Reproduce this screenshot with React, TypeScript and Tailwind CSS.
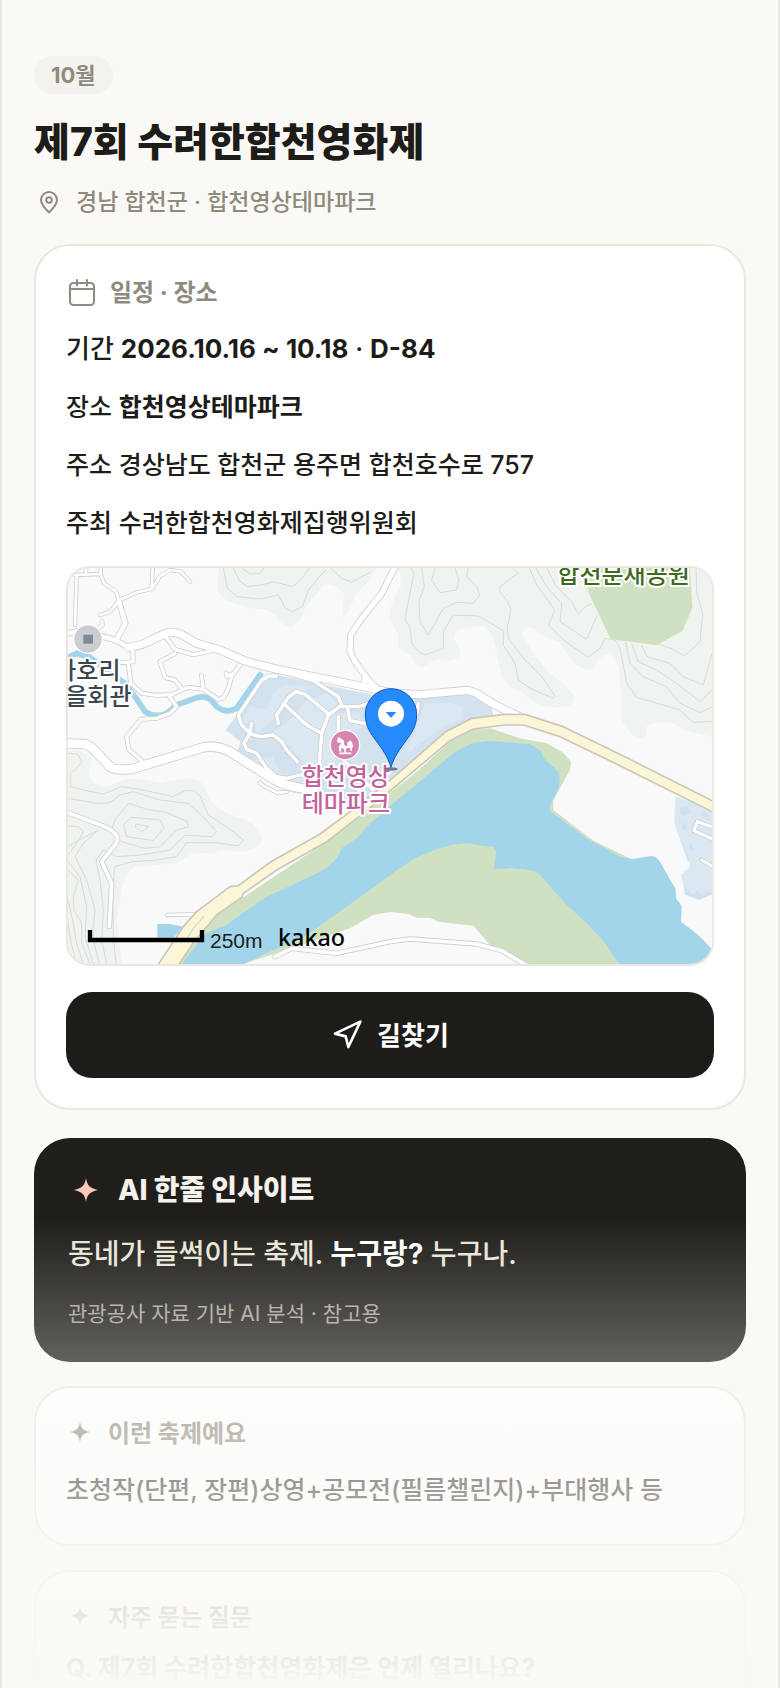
import type { ReactNode } from 'react';
import { Navigation } from 'lucide-react';

const contours = [
  'M545 24L570 42L600 40L612 24',
  'M520 24L538 62L562 80L602 75L640 66L668 72L698 80L722 60L748 24',
  'M490 24L502 85L530 110L600 117L655 105L676 145L698 155L728 138L745 90L776 52L800 28',
  'M812 24L845 55L875 66L930 38',
  'M1052 24L1062 40L1035 175L1052 210L1055 250L1075 275L1095 285L1150 265L1150 215L1180 165L1255 168L1330 212L1330 255L1365 310L1375 360L1410 385L1480 415L1485 408L1445 350L1395 300L1345 235L1342 205L1352 150L1340 120L1318 95L1320 80L1375 38L1360 24',
  'M1085 24L1093 80L1077 120L1080 185L1105 225L1150 145L1190 127L1240 130L1260 105L1250 80L1220 50L1225 24',
  'M1125 24L1115 60L1140 98L1190 90L1196 60L1185 24',
  'M1408 24L1430 75L1485 150L1465 195L1510 240L1585 292L1620 265L1635 235L1665 240L1680 265L1700 370L1730 412L1860 450L1900 487L1956 484',
  'M1427 24L1460 80L1505 130L1500 185L1580 238L1612 165',
  'M1460 24L1490 80L1535 125L1555 163L1570 145L1595 130',
  'M1697 245L1710 310L1750 350L1820 380L1860 430L1920 458L1956 440',
  'M1715 250L1735 305L1790 330L1850 370L1920 425L1956 390',
  'M1745 255L1760 290L1830 310L1870 350L1930 375L1956 280',
  'M1793 252L1840 268L1873 288L1920 245L1928 160L1910 100L1908 24',
  'M24 580L52 582L66 605L50 625L32 640L32 680L70 690L130 702L185 680L240 688L340 710L376 692L402 692L422 710L445 765L520 815L550 840L535 858L470 848L380 848L350 890L290 900L215 905L165 920L158 980L160 1130L168 1212',
  'M24 715L110 730L150 728L180 705L220 695L300 720L385 730L425 765L470 815L455 830L375 826L330 870L240 885L170 890L130 870L108 900L120 960L130 1050L125 1140L140 1212',
  'M205 730L165 780L155 808L185 845L255 865L300 860L350 810L386 800L382 785L318 757L270 750Z',
  'M215 772L190 795L200 830L280 842L312 804L300 780Z',
  'M228 792L226 802L245 815L266 800Z',
  'M24 798L55 800L70 815L45 858L24 885',
  'M24 858L115 810L70 850L45 890L80 960L105 1050L98 1130L118 1212',
  'M24 905L60 950L80 1040L75 1130L100 1212',
  'M24 930L55 960L40 1010L42 1050L65 1090L65 1150L90 1212',
  'M24 1020L40 1090L50 1150L70 1212',
  'M24 1090L34 1150L48 1205',
];

const roads = [
  { w: 8, d: 'M50 45L45 195M45 45L122 42L132 70L168 95L180 130M78 42V24M122 42V24' },
  { w: 8, d: 'M120 165L150 155L180 120L230 97L275 87L300 48L330 30L362 34L390 65M278 24L275 85' },
  { w: 14, d: 'M176 122L196 190L170 238M24 220L60 212L130 230L165 240L212 264' },
  { w: 9, d: 'M118 202L127 195L126 184' },
  { w: 10, d: 'M218 270L220 305L185 308M205 310L212 368L245 400L290 406L335 404L385 382L430 388L475 418L492 412L505 385L515 348L540 315' },
  { w: 10, d: 'M318 232L345 268L400 284L450 274M345 280L300 305L315 352L345 360L364 385' },
  { w: 9, d: 'M424 345L430 385M512 342L502 350L498 338' },
  { w: 10, d: 'M328 408L350 440L330 460L290 475L243 478L200 530L206 568L245 602' },
  { w: 22, d: 'M205 262Q240 258 260 247L310 223Q340 210 365 224L410 250L480 270L560 305L640 325L760 350L910 380L1000 400L1080 404L1222 391L1250 400L1296 430L1340 452L1400 480' },
  { w: 16, d: 'M1003 24L965 100L905 175L872 225L870 275L885 305L925 360L955 390M912 375L915 350' },
  { w: 26, d: 'M24 550L75 552L95 562L150 620Q165 632 215 627L430 562Q470 555 510 575L640 657Q670 678 760 690' },
  { w: 11, d: 'M24 758L130 798Q190 825 165 855L125 905L155 970L148 1100' },
  { w: 8, d: 'M322 1065L400 1063M600 668L612 678L650 698L680 696' },
  { w: 11, d: 'M645 1190L695 1165L830 1180L990 1145L1050 1137L1250 1152L1325 1172L1400 1216' },
  { w: 10, d: 'M650 348H625L604 362L535 465L545 495L570 520L552 550L560 568L590 580L620 625L650 650' },
  { w: 10, d: 'M575 490L568 520L600 530L640 525L665 545L680 570L712 605' },
  { w: 10, d: 'M655 490L650 465L685 412L708 395L735 403L810 465M670 430L740 495L785 520' },
  { w: 10, d: 'M690 342L760 362L835 410L845 435L805 465L785 520L776 640M845 440H895L960 420M863 445L870 482L940 495M835 470V545' },
  { w: 10, d: 'M850 600L940 690M780 640L720 645L680 655L640 648M880 665L920 730M1075 430L1070 462' },
  { w: 9, d: 'M1960 838L1902 812L1912 785L1960 802M1925 900L1960 920' },
];

const roadPath =
  'M293 1216L370 1100L410 1055L510 980L535 977L630 907L780 822L920 718L1020 635L1155 517L1235 475L1335 463H1395L1510 500L1710 598L1960 724V757L1645 600L1500 530L1390 495H1335L1240 507L1170 542L1065 630L920 752L800 845L650 930L550 1000L545 1012L470 1065L400 1148L355 1216Z';

function MapLabel({ x, y, fill, anchor, children }: { x: number; y: number; fill: string; anchor?: 'middle' | 'start'; children: ReactNode }) {
  return (
    <text
      x={x}
      y={y}
      fill={fill}
      textAnchor={anchor ?? 'start'}
      stroke="#fff"
      strokeWidth="12"
      strokeLinejoin="round"
      paintOrder="stroke"
      fontSize="72"
      fontWeight="500"
    >
      {children}
    </text>
  );
}

function VenueMap() {
  return (
    <svg
      viewBox="24 24 1932 1188"
      preserveAspectRatio="xMidYMid slice"
      className="block h-[396px] w-full"
      role="img"
      aria-label="합천영상테마파크 지도"
    >
      <rect x="-400" y="-400" width="3000" height="2200" fill="#f9f9f9" />

      {/* Hills */}
      <g fill="#eff4f1">
        <path d="M474 24V95L495 120L560 142L620 150L645 165Q665 200 695 201Q722 190 735 145L790 75Q815 65 852 98L848 174L865 155L890 100L925 65L950 24Z" />
        <path d="M1022 80Q985 140 988 175L1015 225V262L1050 285Q1070 325 1090 322L1130 298Q1190 310 1202 280Q1195 250 1180 235Q1185 210 1205 208L1270 198Q1300 220 1305 260L1325 350Q1350 390 1385 395L1420 425Q1470 450 1525 438Q1550 425 1540 405L1515 375L1460 330L1420 280L1385 222Q1395 195 1420 205L1450 228L1500 248L1535 300Q1570 340 1600 325Q1620 280 1650 285Q1680 300 1680 370L1685 480Q1715 535 1745 538Q1760 530 1760 500Q1780 480 1840 490L1870 510L1956 530V24H1010L1024 50Z" />
        <path d="M24 570H60L95 595L85 650Q110 685 145 678L190 660Q220 650 300 668L375 655Q430 655 440 695Q450 750 560 780Q610 810 605 845Q580 875 540 875L490 870L455 880H400L350 910L230 920Q195 930 185 990L170 1080L185 1212H24Z" />
      </g>
      <g fill="none" stroke="#d5dbd7" strokeWidth="3" strokeLinejoin="round">
        {contours.map((d) => (
          <path key={d} d={d} />
        ))}
      </g>
      <path d="M1585 24V97L1620 170L1652 237L1790 256L1868 212L1897 143L1890 24Z" fill="#cfe1c1" />

      {/* Theme park grounds */}
      <path d="M620 345L497 510L542 545L527 590L600 640L690 695L900 740L1020 640L1155 517L1235 475L1300 465L1295 440L1225 402L990 415L780 372L650 345Z" fill="#d2e3ef" />
      <g fill="#dbe8f1">
        <path d="M670 375L760 380L720 400L680 420L640 480L590 520L580 480L540 500L570 440L620 450L640 400Z" />
        <path d="M740 420L800 400L830 430L800 460L900 460L910 500L860 520L820 610L740 620L690 560L640 520L690 480Z" />
        <path d="M1095 432L1180 428L1210 445L1205 478L1150 500L1040 580L1070 500Z" />
        <path d="M560 600L640 590L660 640L760 650L700 690Z" />
      </g>
      <path d="M1846 708L1843 790L1890 900L1888 922L1863 945L1875 1003L1918 1018L1960 1003V752Z" fill="#dbe8f1" />
      <g fill="#cfe1ee">
        <path d="M1860 745L1880 740L1892 755L1870 767L1860 760Z" />
        <path d="M1925 755L1948 765L1940 775L1924 768Z" />
        <path d="M1865 785L1880 795L1878 816L1866 808Z" />
        <path d="M1893 850L1902 868L1895 875L1887 862Z" />
        <path d="M1843 790L1890 900L1884 905Z" />
        <path d="M1873 984L1900 1003L1910 992L1930 1008L1945 990L1960 1000L1918 1020L1875 1004Z" />
      </g>

      {/* River and banks */}
      <path d="M355 1212L470 1065L800 845L1065 640L1170 545L1240 508L1290 505L1380 535L1460 550L1510 578L1533 605L1530 630L1480 720V750L1600 842L1720 900L1700 1212H1405L1325 1172L1287 1152L1240 1097L1135 1085L1110 1073H1070L1045 1062L990 1056L940 1065L870 1105L740 1150L550 1212Z" fill="#cfe1c1" />
      <path
        d="M365 1212L440 1118L500 1095L540 1065L620 1010L750 950L800 925L830 895L845 865L890 835L920 800L990 738L1120 630L1180 580L1235 550L1290 542L1410 553L1440 570L1452 595L1485 625L1498 640V680L1468 742L1472 755L1580 835L1680 890L1715 897L1775 888Q1790 890 1800 905L1847 988L1848 1015L1865 1038L1863 1085L1915 1125L1956 1168V1212H1678L1630 1143L1580 1090L1515 1030L1440 945Q1430 934 1410 930L1355 924L1302 928L1308 875L1302 860L1270 858L1225 850L1185 853L1130 867L1060 898L1000 938L860 1040L740 1125L550 1212Z"
        fill="#a3d5ea"
      />
      <path d="M292 1092H330L372 1100L340 1133H292Z" fill="#a3d5ea" />
      <path d="M24 292L50 280L90 292L150 340L195 370L225 410L255 455Q285 475 320 460L350 435L410 413Q440 405 455 422L470 440Q500 462 530 445Q560 400 605 338" fill="none" stroke="#a3d5ea" strokeWidth="17" />

      {/* Roads */}
      <g fill="none" strokeLinecap="round" strokeLinejoin="round">
        {roads.map((r) => (
          <path key={r.d} d={r.d} stroke="#cfcfcf" strokeWidth={r.w + 5} />
        ))}
        {roads.map((r) => (
          <path key={r.d} d={r.d} stroke="#fff" strokeWidth={r.w} />
        ))}
      </g>
      <path d={roadPath} fill="#fbf6d8" stroke="#cdc7b7" strokeWidth="5" strokeLinejoin="round" />
      <path d="M382 1135L400 1105L432 1068" fill="none" stroke="#cdc7b7" strokeWidth="3" />

      {/* Places */}
      <circle cx="84" cy="237" r="43" fill="#cacdd3" stroke="#fff" strokeWidth="4" />
      <rect x="70" y="224" width="29" height="27" fill="#7f8b91" />
      <circle cx="855" cy="555" r="44" fill="#d685ae" stroke="#fff" strokeWidth="4" />
      <path d="M834 530L839 533L850 540L853 546L851 552L857 558H862V546H866L870 541L876 547L880 560L876 563V572L871 572L870 564L862 564L858 569H853L846 563L842 569L846 574L838 575L836 560L842 552L841 547L834 549L831 544Z" fill="#fff" />
      <path d="M838 580H874M855 566V578" stroke="#fff" strokeWidth="5" />
      <g fontFamily='"Noto Sans CJK KR", sans-serif'>
        <MapLabel x={82} y={357} fill="#3a464d" anchor="middle">가호리</MapLabel>
        <MapLabel x={82} y={435} fill="#3a464d" anchor="middle">마을회관</MapLabel>
        <MapLabel x={725} y={676} fill="#c4629a">합천영상</MapLabel>
        <MapLabel x={725} y={755} fill="#c4629a">테마파크</MapLabel>
        <MapLabel x={1492} y={69} fill="#3f6a1e">합천분재공원</MapLabel>
      </g>

      {/* Marker */}
      <ellipse cx="993" cy="627" rx="20" ry="5" fill="#6b7c89" />
      <path
        d="M993 622C984 590 966 566 948 542C932 520 916 500 916 463A77 77 0 0 1 1070 463C1070 500 1054 520 1038 542C1020 566 1002 590 993 622Z"
        fill="#258bfc"
        stroke="#1458b8"
        strokeWidth="3"
      />
      <circle cx="993" cy="461" r="39" fill="#fff" />
      <path d="M977 456H1009L993 474Z" fill="#258bfc" />

      {/* Scale */}
      <path d="M90 1110V1140H426V1110" fill="none" stroke="#000" strokeWidth="13" />
      <text x="450" y="1163" fontSize="63" fill="#1c1c1c" fontFamily='"Liberation Sans", sans-serif'>
        250m
      </text>
      <text x="654" y="1157" fontSize="70" fontWeight="500" fill="#000" fontFamily='"Noto Sans", sans-serif'>
        kakao
      </text>
    </svg>
  );
}

function PinIcon() {
  return (
    <svg viewBox="0 0 30 30" className="size-[30px] shrink-0" fill="none" stroke="currentColor" strokeWidth="2" strokeLinejoin="round" aria-hidden="true">
      <path d="M15 25.500C11 21.500 7 17.500 7 13a8 8 0 0 1 16 0C23 17.500 19 21.500 15 25.500Z" />
      <circle cx="15" cy="13" r="2.800" />
    </svg>
  );
}

function CalendarIcon() {
  return (
    <svg viewBox="0 0 32 32" className="size-8 shrink-0" fill="none" stroke="currentColor" strokeWidth="2" strokeLinecap="round" aria-hidden="true">
      <rect x="4" y="6" width="24" height="22" rx="3.500" />
      <path d="M4 12H28M11 3V8.500M21 3V8.500" />
    </svg>
  );
}

function Sparkle({ className }: { className: string }) {
  return (
    <svg viewBox="0 0 24 24" className={className} fill="currentColor" aria-hidden="true">
      <path d="M12 0C13 7 15.500 10.200 24 12C15.500 13.800 13 17 12 24C11 17 8.500 13.800 0 12C8.500 10.200 11 7 12 0Z" />
    </svg>
  );
}

function Card({ children }: { children: ReactNode }) {
  return <section className="rounded-[36px] border-2 border-[#e9e7e0] bg-white p-[30px]">{children}</section>;
}

function SectionTitle({ children }: { children: ReactNode }) {
  return (
    <h2 className="flex items-center gap-[14px] text-2xl leading-8 font-bold text-[#8f8a7e]">
      <Sparkle className="mx-1 mb-1 size-5 shrink-0" />
      {children}
    </h2>
  );
}

export default function App() {
  return (
    <main className="relative h-screen overflow-hidden border-x-2 border-[#e9e7e0] bg-[#faf9f5] px-8 pt-14 font-[Inter,'Noto_Sans_CJK_KR',sans-serif] font-medium text-[#1d1c18]">
      <header>
        <span className="inline-flex h-[38px] items-center rounded-full bg-[#f3f2ed] px-[17px] text-[22px] font-bold text-[#8f8a7e]">
          10월
        </span>
        <h1 className="mt-5 text-[39px] leading-[56px] font-extrabold">제7회 수려한합천영화제</h1>
        <p className="mt-3 flex items-center gap-3 text-[23px] leading-10 text-[#8f8a7e]">
          <PinIcon />
          경남 합천군 · 합천영상테마파크
        </p>
      </header>

      <div className="mt-[22px]">
        <Card>
          <h2 className="flex items-center gap-3 text-2xl leading-[34px] font-bold text-[#8f8a7e]">
            <CalendarIcon />
            일정 · 장소
          </h2>
          <div className="mt-[10px] text-[25px] leading-[58px]">
            <p className="text-[26px] leading-[58px]">
              기간 <b>2026.10.16 ~ 10.18</b> · <b>D-84</b>
            </p>
            <p>
              장소 <b>합천영상테마파크</b>
            </p>
            <p>주소 경상남도 합천군 용주면 합천호수로 757</p>
            <p>주최 수려한합천영화제집행위원회</p>
          </div>
          <div className="mt-[14px] overflow-hidden rounded-3xl border-2 border-[#ebe6df]">
            <VenueMap />
          </div>
          <button
            type="button"
            className="mt-[26px] flex h-[86px] w-full items-center justify-center gap-[14px] rounded-[26px] bg-[#1d1c18] text-[26px] font-bold text-white"
          >
            <Navigation size={32} strokeWidth={2} />
            길찾기
          </button>
        </Card>
      </div>

      {/* AI insight */}
      <section className="mt-7 h-56 rounded-[36px] bg-[#1f1e1a] px-[34px] pt-8">
        <h2 className="flex items-center gap-5 text-[28px] leading-10 font-extrabold text-[#f4f2ec]">
          <Sparkle className="ml-[6px] size-6 shrink-0 text-[#ffc8b4]" />
          AI 한줄 인사이트
        </h2>
        <p className="mt-5 text-[28px] leading-[48px] text-[#e9e5d9]">
          동네가 들썩이는 축제. <b className="text-white">누구랑?</b> 누구나.
        </p>
        <p className="mt-5 text-[21px] leading-8 font-normal text-[#a8a397]">관광공사 자료 기반 AI 분석 · 참고용</p>
      </section>

      <div className="mt-6">
        <Card>
          <SectionTitle>이런 축제예요</SectionTitle>
          <p className="mt-4 text-[25px] leading-[48px]">초청작(단편, 장편)상영+공모전(필름챌린지)+부대행사 등</p>
        </Card>
      </div>

      <div className="mt-6">
        <Card>
          <SectionTitle>자주 묻는 질문</SectionTitle>
          <h3 className="text-[25px] leading-[68px] font-bold">Q. 제7회 수려한합천영화제은 언제 열리나요?</h3>
        </Card>
      </div>

      {/* Bottom fade */}
      <div className="pointer-events-none absolute inset-x-0 bottom-0 h-[470px] bg-linear-to-b from-[#faf9f5]/0 to-[#faf9f5]" />
    </main>
  );
}
